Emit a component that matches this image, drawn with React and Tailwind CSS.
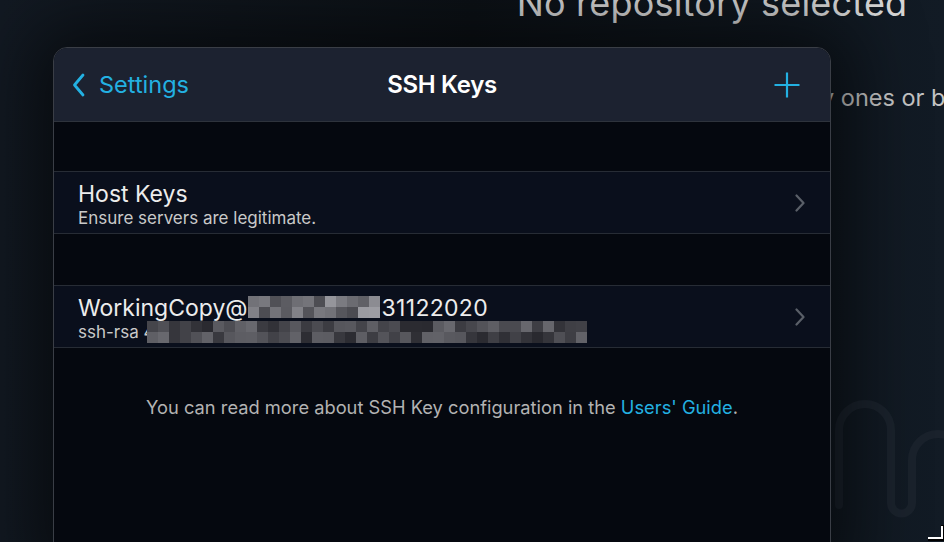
// deterministic shades for the pixelated (redacted) strips
function mosaic(cols, rows, seed, lo, hi) {
  const cells = [];
  let s = seed;
  for (let r = 0; r < rows; r++) {
    for (let c = 0; c < cols; c++) {
      s = (s * 9301 + 49297) % 233280;
      const v = Math.round(lo + (s / 233280) * (hi - lo));
      cells.push({ r, c, v });
    }
  }
  return cells;
}

function Redacted({ cols, rows, cell, seed, lo, hi, className }) {
  const cells = mosaic(cols, rows, seed, lo, hi);
  return (
    <svg width={cols * cell} height={rows * cell} className={className}>
      {cells.map(({ r, c, v }) => (
        <rect key={r + '-' + c} x={c * cell} y={r * cell} width={cell} height={cell} fill={`rgb(${v},${v},${v + 6})`} />
      ))}
    </svg>
  );
}

function Chevron() {
  return (
    <svg width="12" height="18" viewBox="0 0 12 18" className="shrink-0">
      <path d="M2.5 1.5 L9.5 9 L2.5 16.5" fill="none" stroke="#5a5f68" strokeWidth="2.2" strokeLinecap="round" strokeLinejoin="round" />
    </svg>
  );
}

function Row({ title, subtitle }) {
  return (
    <div className="flex items-center h-[63px] bg-[#0a0f1c] border-y border-[#272c35] pl-6 pr-[24px]">
      <div className="flex-1 min-w-0 pt-[4px]">
        {title}
        {subtitle}
      </div>
      <Chevron />
    </div>
  );
}

export default function App() {
  return (
    <div
      className="relative w-[944px] h-[542px] overflow-hidden bg-[#111922] text-white"
      style={{ fontFamily: 'Inter, "Noto Sans", sans-serif' }}
    >
      {/* background panel */}
      <div className="absolute inset-0 bg-gradient-to-r from-[#121922] via-[#0c1116] to-[#121b25]" />
      <div className="relative flex flex-col items-center pl-[480px]">
        <div className="mt-[-19px] text-[36px] leading-[44px] text-[#d6d6d6] tracking-[0.2px] whitespace-nowrap">No repository selected</div>
        <div className="self-start ml-[341px] mt-[59px] text-[23.5px] leading-[28px] text-[#c4c4c4] whitespace-nowrap">
          y ones or browse
        </div>
      </div>

      <svg className="absolute left-0 top-0" width="944" height="542">
        <path
          d="M839 505 L839 430 A26 26 0 0 1 891 430 L891 503 A10.5 10.5 0 0 0 912 503 L912 460 A26 26 0 0 1 964 460"
          fill="none"
          stroke="#1a222c"
          strokeWidth="8"
          strokeLinecap="round"
        />
        <path d="M928 539 L943 539 L943 525" fill="none" stroke="#000" strokeWidth="4" />
        <path d="M928 538 L942 538 L942 526" fill="none" stroke="#fff" strokeWidth="2" />
      </svg>

      {/* modal sheet */}
      <div className="absolute left-[53px] top-[47px] w-[778px] h-[520px] flex flex-col rounded-t-[14px] border border-[#3a3e46] bg-[#05080f] overflow-hidden shadow-[0_0_70px_20px_rgba(0,0,0,0.55)]">
        <div className="relative flex items-center h-[74px] bg-[#1c2230] border-b border-[#2e333c] pl-[18px] pr-[30px] shrink-0">
          <div className="flex items-center text-[#23b1e2]">
            <svg width="14" height="24" viewBox="0 0 14 24" className="shrink-0">
              <path d="M11 2 L2.5 12 L11 22" fill="none" stroke="#23b1e2" strokeWidth="2.8" strokeLinecap="round" strokeLinejoin="round" />
            </svg>
            <span className="ml-[13px] text-[23.5px] leading-none">Settings</span>
          </div>
          <div className="absolute inset-x-0 text-center text-[24px] font-semibold tracking-[-0.3px] pointer-events-none">
            SSH Keys
          </div>
          <svg width="26" height="26" viewBox="0 0 26 26" className="ml-auto shrink-0">
            <path d="M13 0.5 V25.5 M0.5 13 H25.5" stroke="#23b1e2" strokeWidth="2.2" />
          </svg>
        </div>

        <div className="h-[49px]" />
        <Row
          title={<div className="text-[23px] leading-[26px] text-[#ececec]">Host Keys</div>}
          subtitle={<div className="text-[17px] leading-[22px] text-[#c9c9c9]">Ensure servers are legitimate.</div>}
        />
        <div className="h-[51px]" />
        <Row
          title={
            <div className="flex items-center text-[23px] leading-[26px] text-[#ececec] whitespace-nowrap">
              <span>WorkingCopy@</span>
              <Redacted cols={12} rows={2} cell={11} seed={7} lo={70} hi={160} className="mt-[-2px]" />
              <span className="ml-[2px] tracking-[0.3px]">31122020</span>
            </div>
          }
          subtitle={
            <div className="flex items-center text-[17px] leading-[22px] text-[#c9c9c9] whitespace-nowrap">
              <span>ssh-rsa 4</span>
              <Redacted cols={40} rows={2} cell={11} seed={31} lo={40} hi={105} className="-ml-[8px] h-[22px]" />
            </div>
          }
        />
        <div className="mt-[46px] text-center text-[18.3px] text-[#b3b3b3] whitespace-nowrap">
          You can read more about SSH Key configuration in the <span className="text-[#23b1e2]">Users' Guide</span>.
        </div>
      </div>
    </div>
  );
}
